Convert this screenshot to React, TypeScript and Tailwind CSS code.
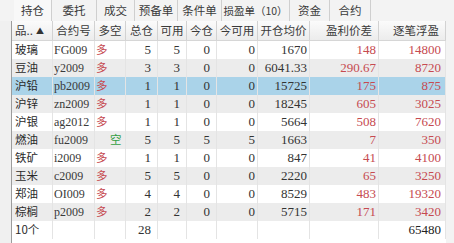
import React from "react";

const tabs: { label: string; w: string }[] = [
  { label: "持仓", w: "w-[38px]" },
  { label: "委托", w: "w-[45px]" },
  { label: "成交", w: "w-[38px]" },
  { label: "预备单", w: "w-[43px]" },
  { label: "条件单", w: "w-[44px]" },
  { label: "损盈单（10）", w: "w-[68px]" },
  { label: "资金", w: "w-[40px]" },
  { label: "合约", w: "w-[41px]" },
];

const colW = [
  "w-[41px]",
  "w-[42px]",
  "w-[31px]",
  "w-[32px]",
  "w-[29px]",
  "w-[30px]",
  "w-[41px]",
  "w-[52px]",
  "w-[69px]",
  "w-[67px]",
];

const headers = ["品..", "合约号", "多空", "总仓", "可用", "今仓", "今可用", "开仓均价", "盈利价差", "逐笔浮盈"];
const headerAlign = [
  "justify-start pl-[3px]",
  "justify-center",
  "justify-center",
  "justify-center",
  "justify-center",
  "justify-center",
  "justify-center",
  "justify-center",
  "justify-end pr-[6px]",
  "justify-end pr-[6px]",
];

type Row = string[];
const rows: Row[] = [
  ["玻璃", "FG009", "多", "5", "5", "0", "0", "1670", "148", "14800"],
  ["豆油", "y2009", "多", "3", "3", "0", "0", "6041.33", "290.67", "8720"],
  ["沪铅", "pb2009", "多", "1", "1", "0", "0", "15725", "175", "875"],
  ["沪锌", "zn2009", "多", "1", "1", "0", "0", "18245", "605", "3025"],
  ["沪银", "ag2012", "多", "1", "1", "0", "0", "5664", "508", "7620"],
  ["燃油", "fu2009", "空", "5", "5", "5", "5", "1663", "7", "350"],
  ["铁矿", "i2009", "多", "1", "1", "0", "0", "847", "41", "4100"],
  ["玉米", "c2009", "多", "5", "5", "0", "0", "2220", "65", "3250"],
  ["郑油", "OI009", "多", "4", "4", "0", "0", "8529", "483", "19320"],
  ["棕榈", "p2009", "多", "2", "2", "0", "0", "5715", "171", "3420"],
];

const CJK = "font-['Noto_Sans_CJK_SC','Noto_Sans',sans-serif]";
const SERIF = "font-['Liberation_Serif','Noto_Sans_CJK_SC',serif]";

function Cell({ i, children, extra = "" }: { i: number; children?: React.ReactNode; extra?: string }) {
  return (
    <div className={`${colW[i]} shrink-0 h-full flex items-center border-r border-[#e4e4e4] overflow-hidden whitespace-nowrap ${extra}`}>
      {children}
    </div>
  );
}

function DataRow({ r, idx }: { r: Row; idx: number }) {
  const bg = idx === 2 ? "bg-[#aad3e9]" : idx % 2 === 1 ? "bg-[#ececec]" : "bg-white";
  const red = "text-[#c64a50]";
  return (
    <div className={`flex h-[18px] ${bg}`}>
      <Cell i={0} extra={`pl-[3px] text-[11.5px] text-[#2a2a2a] ${CJK}`}>{r[0]}</Cell>
      <Cell i={1} extra={`pl-[1px] text-[12px] text-[#3a3a3a] ${SERIF}`}>{r[1]}</Cell>
      <Cell
        i={2}
        extra={`text-[11.5px] ${CJK} ${r[2] === "空" ? "pl-[15px] text-[#35a045]" : `pl-[1px] ${red}`}`}
      >
        {r[2]}
      </Cell>
      <Cell i={3} extra={`justify-end pr-[6px] text-[13px] text-[#333] ${SERIF}`}>{r[3]}</Cell>
      <Cell i={4} extra={`justify-end pr-[6px] text-[13px] text-[#333] ${SERIF}`}>{r[4]}</Cell>
      <Cell i={5} extra={`justify-end pr-[6px] text-[13px] text-[#333] ${SERIF}`}>{r[5]}</Cell>
      <Cell i={6} extra={`justify-end pr-[2px] text-[13px] text-[#333] ${SERIF}`}>{r[6]}</Cell>
      <Cell i={7} extra={`justify-end pr-[2px] text-[13px] text-[#333] ${SERIF}`}>{r[7]}</Cell>
      <Cell i={8} extra={`justify-end pr-[2px] text-[13px] ${red} ${SERIF}`}>{r[8]}</Cell>
      <Cell i={9} extra={`justify-end pr-[4px] text-[13px] ${red} ${SERIF}`}>{r[9]}</Cell>
    </div>
  );
}

export default function App() {
  return (
    <div className="w-[454px] h-[243px] bg-[#f3f3f3] overflow-hidden flex flex-col">
      <div className="h-[21px] flex pl-[14px] shrink-0">
        {tabs.map((t, i) => (
          <div
            key={t.label}
            className={`${t.w} h-full flex items-center justify-center border-r border-[#cfcfcf] whitespace-nowrap text-[#3a3a3a] ${CJK} ${
              i === 5 ? "text-[10.5px]" : "text-[11.5px]"
            } ${i === 0 ? "bg-[#f8f8f8]" : ""}`}
          >
            {t.label}
          </div>
        ))}
      </div>
      <div className="flex flex-1">
        <div className="w-[12px] shrink-0 border-r border-[#9c9c9c] bg-[#f0f0f0]" />
        <div className="flex flex-col w-[434px]">
          <div className="flex h-[20px] bg-gradient-to-b from-[#fbfbfb] to-[#ececec] border-b border-[#d6d6d6]">
            {headers.map((h, i) => (
              <div
                key={h}
                className={`${colW[i]} shrink-0 h-full flex items-center border-r border-[#d2d2d2] text-[11.5px] text-[#3a3a3a] whitespace-nowrap ${CJK} ${headerAlign[i]}`}
              >
                {h}
                {i === 0 && <span className="ml-[3px] text-[8px] text-[#333]">▲</span>}
              </div>
            ))}
          </div>
          {rows.map((r, idx) => (
            <DataRow key={r[0]} r={r} idx={idx} />
          ))}
          <div className="flex h-[18px] bg-white">
            <Cell i={0} extra={`pl-[3px] text-[11.5px] text-[#2a2a2a] ${CJK}`}>10个</Cell>
            <Cell i={1} />
            <Cell i={2} />
            <Cell i={3} extra={`justify-end pr-[6px] text-[13px] text-[#333] ${SERIF}`}>28</Cell>
            <Cell i={4} />
            <Cell i={5} />
            <Cell i={6} />
            <Cell i={7} />
            <Cell i={8} />
            <Cell i={9} extra={`justify-end pr-[4px] text-[13px] text-[#222] ${SERIF}`}>65480</Cell>
          </div>
          <div className="flex-1 bg-white" />
        </div>
        <div className="flex-1 bg-[#f3f3f3]" />
      </div>
    </div>
  );
}
